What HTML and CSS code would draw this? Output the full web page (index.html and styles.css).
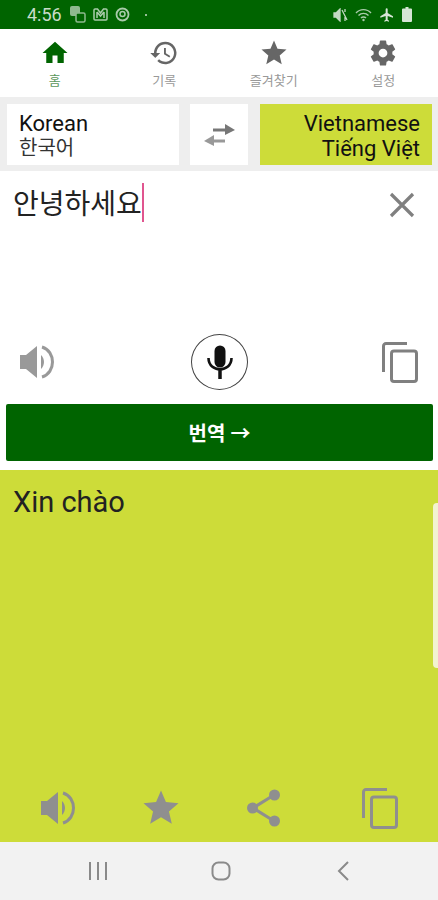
FILE: index.html
```html
<!DOCTYPE html>
<html lang="ko">
<head>
    <meta charset="UTF-8">
    <meta name="viewport" content="width=device-width, initial-scale=1.0">
    <title>번역</title>
    <link rel="stylesheet" href="styles.css">
</head>
<body>
    <div class="status-bar">
        <span class="clock">4:56</span>
        <svg class="st-icon" width="17" height="17" viewBox="0 0 17 17"><rect x="1" y="0" width="10" height="10" rx="2" fill="#8fb98f"/><rect x="7" y="7" width="9" height="9" rx="1.500" fill="#006400" stroke="#8fb98f" stroke-width="1.500"/></svg>
        <svg class="st-icon" width="15" height="13" viewBox="0 0 15 13"><path d="M2 1h2.500L7.500 5l3-4H13a1 1 0 0 1 1 1v9a1 1 0 0 1-1 1H2a1 1 0 0 1-1-1V2a1 1 0 0 1 1-1zM4 4v6M11 4v6M4 4l3.500 4L11 4" fill="none" stroke="#a9cbaa" stroke-width="1.500"/></svg>
        <svg class="st-icon" width="15" height="15" viewBox="0 0 15 15"><circle cx="7.500" cy="7.500" r="6" fill="none" stroke="#a9cbaa" stroke-width="1.800"/><circle cx="7.500" cy="7" r="2.500" fill="none" stroke="#a9cbaa" stroke-width="1.500"/></svg>
        <span class="st-dot"></span>
        <span class="st-spacer"></span>
        <svg class="st-icon" width="15" height="14" viewBox="0 0 15 14"><path d="M1 5h2l4-4v12l-4-4H1zM9 2l5 10M12 1v3M12 9v4" fill="#c3d9c3" stroke="#c3d9c3" stroke-width="1.300"/></svg>
        <svg class="st-icon" width="17" height="14" viewBox="0 0 17 14"><path d="M1 5a10 10 0 0 1 15 0M3.500 7.500a7 7 0 0 1 10 0M6 10a3.500 3.500 0 0 1 5 0" fill="none" stroke="#a9cbaa" stroke-width="1.400"/><circle cx="8.500" cy="12" r="1.200" fill="#a9cbaa"/></svg>
        <svg class="st-icon" width="16" height="16" viewBox="0 0 24 24"><path d="M21 16v-2l-8-5V3.500a1.500 1.500 0 0 0-3 0V9l-8 5v2l8-2.500V19l-2 1.500V22l3.500-1 3.500 1v-1.500L13 19v-5.500z" fill="#d5e5d5"/></svg>
        <svg class="st-icon" width="10" height="15" viewBox="0 0 10 15"><path d="M3.500 0h3v1.500H9a1 1 0 0 1 1 1V14a1 1 0 0 1-1 1H1a1 1 0 0 1-1-1V2.500a1 1 0 0 1 1-1h2.500z" fill="#d5e5d5"/></svg>
    </div>

    <div class="tabs">
        <div class="tab active">
            <svg width="30" height="30" viewBox="0 0 24 24"><path d="M10 20v-6h4v6h5v-8h3L12 3 2 12h3v8z" fill="#006400"/></svg>
            <span>홈</span>
        </div>
        <div class="tab">
            <svg width="30" height="30" viewBox="0 0 24 24"><path d="M13 3a9 9 0 0 0-9 9H1l3.890 3.890.07.140L9 12H6a7 7 0 1 1 2.050 4.950L6.630 18.370A9 9 0 1 0 13 3zm-1 5v5l4.280 2.540.72-1.210-3.500-2.080V8z" fill="#666"/></svg>
            <span>기록</span>
        </div>
        <div class="tab">
            <svg width="30" height="30" viewBox="0 0 24 24"><path d="M12 17.270L18.180 21l-1.640-7.030L22 9.240l-7.190-.610L12 2 9.190 8.630 2 9.240l5.460 4.730L5.820 21z" fill="#666"/></svg>
            <span>즐겨찾기</span>
        </div>
        <div class="tab">
            <svg width="30" height="30" viewBox="0 0 24 24"><path d="M19.430 12.980c.04-.320.07-.640.07-.980s-.030-.660-.070-.980l2.110-1.650c.190-.150.240-.420.120-.640l-2-3.460c-.120-.220-.390-.300-.610-.220l-2.490 1c-.520-.400-1.080-.730-1.690-.980l-.380-2.650A.488.488 0 0 0 14 2h-4c-.250 0-.460.180-.490.420l-.380 2.650c-.610.250-1.170.590-1.690.980l-2.490-1c-.230-.090-.490 0-.610.220l-2 3.460c-.130.220-.070.490.120.640l2.110 1.650c-.040.320-.070.650-.070.980s.030.660.070.980l-2.110 1.650c-.190.150-.240.420-.120.640l2 3.460c.120.220.390.300.610.220l2.490-1c.520.400 1.080.730 1.690.980l.380 2.650c.030.240.240.420.490.420h4c.250 0 .460-.180.490-.420l.380-2.650c.610-.250 1.170-.590 1.690-.980l2.490 1c.230.090.490 0 .610-.220l2-3.460c.120-.220.070-.490-.120-.640zM12 15.500a3.500 3.500 0 1 1 0-7 3.500 3.500 0 0 1 0 7z" fill="#666"/></svg>
            <span>설정</span>
        </div>
    </div>

    <div class="lang-row">
        <div class="lang-box">
            <div class="lang-en">Korean</div>
            <div class="lang-native ko">한국어</div>
        </div>
        <div class="swap">
            <svg width="33" height="24" viewBox="0 0 33 24"><path d="M10 7h14" fill="none" stroke="#777" stroke-width="3"/><path d="M22 1l10 6-10 5z" fill="#777"/><path d="M22 18H9" fill="none" stroke="#999" stroke-width="3"/><path d="M11 12L1 18l10 5z" fill="#999"/></svg>
        </div>
        <div class="lang-box target">
            <div class="lang-en">Vietnamese</div>
            <div class="lang-native">Tiếng Việt</div>
        </div>
    </div>

    <div class="input-panel">
        <div class="input-top">
            <div class="input-text">안녕하세요<span class="caret"></span></div>
            <svg class="clear" width="28" height="28" viewBox="0 0 28 28"><path d="M3 3l22 22M25 3L3 25" stroke="#808080" stroke-width="3.200" fill="none"/></svg>
        </div>
        <div class="input-actions">
            <svg width="37" height="34" viewBox="0 0 37 34"><path d="M0 10h6L17 1v32L6 24H0z" fill="#999"/><path d="M21 10c4 4 4 10 0 14z" fill="#999"/><path d="M22 2c14 4 14 26 0 30" fill="none" stroke="#999" stroke-width="3"/></svg>
            <div class="mic">
                <svg width="26" height="34" viewBox="0 0 26 34"><rect x="7.500" y="0.500" width="11" height="22" rx="5.500" fill="#111"/><path d="M1.500 13c0 15 23 15 23 0" fill="none" stroke="#111" stroke-width="2.600"/><path d="M13 24v10" stroke="#111" stroke-width="3.500"/></svg>
            </div>
            <svg width="36" height="41" viewBox="0 0 36 41"><path d="M25 1.500H4A2.500 2.500 0 0 0 1.500 4v26" fill="none" stroke="#808080" stroke-width="3"/><rect x="9.500" y="9" width="25" height="30.500" rx="2.500" fill="none" stroke="#808080" stroke-width="3"/></svg>
        </div>
        <div class="translate-btn">번역 →</div>
    </div>

    <div class="output-panel">
        <div class="output-text">Xin chào</div>
        <div class="handle"></div>
        <div class="output-actions">
            <svg width="37" height="34" viewBox="0 0 37 34"><path d="M0 10h6L17 1v32L6 24H0z" fill="#8f8f8f"/><path d="M21 10c4 4 4 10 0 14z" fill="#8f8f8f"/><path d="M22 2c14 4 14 26 0 30" fill="none" stroke="#8f8f8f" stroke-width="3"/></svg>
            <svg class="act-star" width="42" height="42" viewBox="0 0 24 24"><path d="M12 17.270L18.180 21l-1.640-7.030L22 9.240l-7.190-.610L12 2 9.190 8.630 2 9.240l5.460 4.730L5.820 21z" fill="#8f8f8f"/></svg>
            <svg class="act-share" width="34" height="38" viewBox="0 0 34 38"><path d="M27 6L6 19l21 13" fill="none" stroke="#8f8f8f" stroke-width="3"/><circle cx="27.500" cy="6" r="5.500" fill="#8f8f8f"/><circle cx="5.500" cy="19" r="5.500" fill="#8f8f8f"/><circle cx="27.500" cy="32" r="5.500" fill="#8f8f8f"/></svg>
            <svg class="act-copy" width="36" height="41" viewBox="0 0 36 41"><path d="M25 1.500H4A2.500 2.500 0 0 0 1.500 4v26" fill="none" stroke="#8f8f8f" stroke-width="3"/><rect x="9.500" y="9" width="25" height="30.500" rx="2.500" fill="none" stroke="#8f8f8f" stroke-width="3"/></svg>
        </div>
    </div>

    <div class="nav-bar">
        <svg width="20" height="18" viewBox="0 0 20 18"><path d="M2 0v18M10 0v18M18 0v18" stroke="#8a8a8a" stroke-width="2"/></svg>
        <svg class="nav-home" width="20" height="20" viewBox="0 0 20 20"><rect x="1.500" y="1.500" width="17" height="17" rx="6" fill="none" stroke="#8a8a8a" stroke-width="2"/></svg>
        <svg width="12" height="20" viewBox="0 0 12 20"><path d="M11 1L2 10l9 9" fill="none" stroke="#8a8a8a" stroke-width="2"/></svg>
    </div>
</body>
</html>
```

FILE: styles.css
```css
html, body {
    margin: 0;
    padding: 0;
}

body {
    width: 438px;
    height: 900px;
    display: flex;
    flex-direction: column;
    overflow: hidden;
    font-family: Roboto, "Noto Sans CJK KR", sans-serif;
    background-color: #fff;
}

.status-bar {
    height: 29px;
    box-sizing: border-box;
    padding: 0 26px 0 27px;
    display: flex;
    align-items: center;
    gap: 7px;
    background-color: #006400;
    color: #c9dcc9;
    font-size: 18px;
}

.st-icon {
    flex: none;
}

.st-dot {
    width: 2px;
    height: 2px;
    margin-left: 8px;
    background-color: #c9dcc9;
    border-radius: 50%;
}

.st-spacer {
    flex: 1;
}

.tabs {
    height: 68px;
    display: flex;
    background-color: #fff;
}

.tab {
    flex: 1;
    display: flex;
    flex-direction: column;
    align-items: center;
    padding-top: 9px;
    box-sizing: border-box;
    font-size: 13px;
    color: #999;
}

.tab span {
    margin-top: 2px;
}

.tab.active {
    color: #5b975b;
}

.lang-row {
    height: 74px;
    box-sizing: border-box;
    padding: 7px 6px 6px 7px;
    display: flex;
    align-items: stretch;
    background-color: #eee;
}

.lang-box {
    width: 172px;
    box-sizing: border-box;
    padding: 7px 12px 0;
    background-color: #fff;
    font-size: 22px;
    line-height: 25px;
    color: #111;
}

.lang-box.target {
    background-color: #cddc39;
    text-align: right;
}

.lang-native.ko {
    font-size: 20px;
    color: #333;
}

.swap {
    width: 58px;
    margin: 0 12px 0 11px;
    display: flex;
    align-items: center;
    justify-content: center;
    background-color: #fff;
}

.input-panel {
    height: 299px;
    display: flex;
    flex-direction: column;
    background-color: #fff;
}

.input-top {
    flex: 1;
    display: flex;
    justify-content: space-between;
    align-items: flex-start;
    padding: 12px 22px 0 13px;
}

.input-text {
    display: flex;
    align-items: flex-start;
    font-size: 28px;
    line-height: 43px;
    color: #222;
}

.caret {
    width: 2px;
    height: 39px;
    background-color: #e0558f;
}

.clear {
    margin-top: 8px;
}

.input-actions {
    display: flex;
    align-items: center;
    justify-content: space-between;
    padding: 0 20px;
    margin-bottom: 14px;
}

.mic {
    width: 55px;
    height: 54px;
    display: flex;
    align-items: center;
    justify-content: center;
    border: 1px solid #444;
    border-radius: 50%;
}

.translate-btn {
    height: 57px;
    margin: 0 5px 9px 6px;
    display: flex;
    align-items: center;
    justify-content: center;
    background-color: #006400;
    color: #fff;
    font-size: 20px;
    font-weight: 700;
    border-radius: 2px;
}

.output-panel {
    position: relative;
    flex: 1;
    display: flex;
    flex-direction: column;
    justify-content: space-between;
    background-color: #cddc39;
}

.output-text {
    padding: 14px 13px;
    font-size: 29px;
    line-height: 36px;
    color: #222;
}

.handle {
    position: absolute;
    top: 33px;
    right: 0;
    width: 5px;
    height: 165px;
    background-color: #f3f3cf;
    border-radius: 4px 0 0 4px;
}

.output-actions {
    display: flex;
    align-items: center;
    padding: 0 0 13px 41px;
}

.act-star {
    margin-left: 62px;
}

.act-share {
    margin-left: 65px;
}

.act-copy {
    margin-left: 81px;
}

.nav-bar {
    height: 58px;
    box-sizing: border-box;
    padding: 0 89px 0 88px;
    display: flex;
    align-items: center;
    justify-content: space-between;
    background-color: #f2f2f2;
}

.nav-home {
    margin-right: 4px;
}
```
